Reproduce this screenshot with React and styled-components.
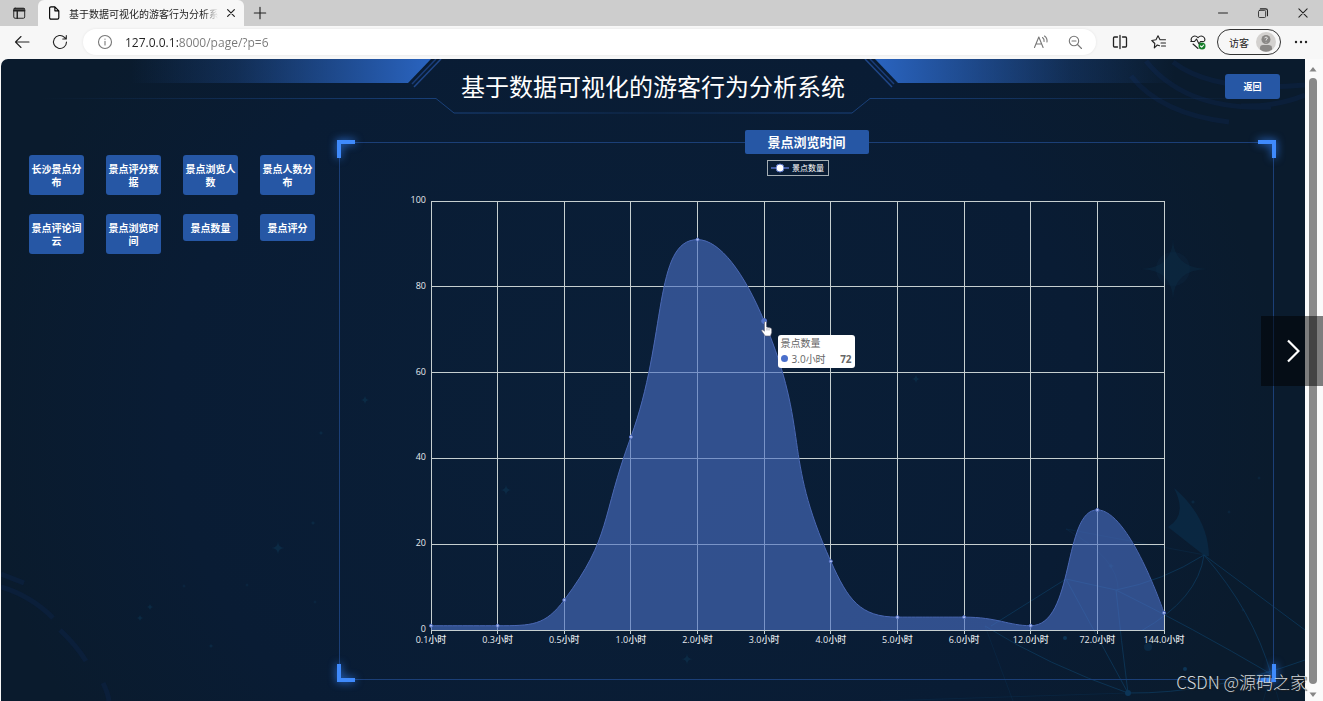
import React from 'react';
import styled, { createGlobalStyle, css } from 'styled-components';

const latin = '"Open Sans", "Noto Sans CJK SC", sans-serif';
const cjk = '"Noto Sans CJK SC", "Open Sans", sans-serif';

const GlobalStyle = createGlobalStyle`
  * {
    box-sizing: border-box;
  }
  body {
    margin: 0;
    background: #f7f7f7;
    font-family: ${latin};
    font-size: 12px;
  }
  button, input {
    font: inherit;
    border: 0;
    padding: 0;
    background: none;
  }
  a {
    text-decoration: none;
  }
  svg {
    display: block;
  }
`;

const Browser = styled.div`
  position: relative;
  display: flex;
  flex-direction: column;
  min-height: 100vh;
  overflow: hidden;
`;

const TabStrip = styled.div`
  display: flex;
  align-items: center;
  height: 26px;
  background: #cdcdcd;
`;

const IconButton = styled.button`
  display: flex;
  align-items: center;
  justify-content: center;
  flex: none;
  width: ${props => props.$width || 40}px;
  height: 24px;
  color: ${props => props.$color || '#222'};
`;

const Tab = styled.div`
  display: flex;
  align-items: center;
  width: 206px;
  height: 26px;
  padding-left: 9px;
  background: #f7f7f7;
  border-radius: 6px 6px 0 0;
`;

const TabTitle = styled.span`
  flex: 1;
  margin-left: 8px;
  overflow: hidden;
  white-space: nowrap;
  font-family: ${cjk};
  font-size: 10px;
  color: #1b1b1b;
  mask-image: linear-gradient(90deg, #000 90%, transparent 100%);
`;

const Spacer = styled.div`
  flex: 1;
`;

const Toolbar = styled.div`
  display: flex;
  align-items: center;
  height: 33px;
  padding: 0 2px 1px;
  background: #f7f7f7;
`;

const AddressBar = styled.label`
  display: flex;
  flex: 1;
  align-items: center;
  height: 26px;
  margin: 0 4px;
  padding: 0 4px 0 14px;
  background: #fff;
  border-radius: 13px;
  box-shadow: 0 0 3px rgba(0, 0, 0, 0.08);
  color: #777;
`;

/* host in dark, the rest of the address in grey */
const AddressInput = styled.input`
  flex: 1;
  min-width: 0;
  height: 20px;
  margin-left: 12px;
  outline: 0;
  font-size: 12px;
  color: transparent;
  background: linear-gradient(90deg, #222 53px, #777 53px);
  background-clip: text;
`;

const Guest = styled.button`
  display: flex;
  align-items: center;
  justify-content: space-between;
  width: 64px;
  height: 26px;
  padding: 0 4px 0 11px;
  border: 1px solid #333;
  border-radius: 13px;
  font-family: ${cjk};
  font-size: 10px;
  color: #222;
`;

const Viewport = styled.div`
  display: flex;
  flex: 1;
  padding-left: 1px;
`;

const Page = styled.div`
  position: relative;
  flex: 1;
  min-width: 0;
  padding-bottom: 21px;
  overflow: hidden;
  border-top-left-radius: 7px;
  background: radial-gradient(ellipse 50% 90% at 48% 55%, #0a1f38 0%, #091c34 70%, #0a1b2d 100%);
`;

const Backdrop = styled.svg`
  position: absolute;
  inset: 0;
  width: 100%;
  height: 100%;
`;

const Header = styled.header`
  position: relative;
  display: grid;
  grid-template-columns: 1fr auto 1fr;
  align-items: center;
  height: 58px;
  margin-bottom: 25px;
  padding-right: 25px;
`;

const HeaderArt = styled.svg`
  position: absolute;
  inset: 0;
  width: 100%;
  height: 58px;
`;

const SystemTitle = styled.h1`
  position: relative;
  grid-column: 2;
  margin: 0 0 4px 25px;
  font-family: ${cjk};
  font-size: 24px;
  font-weight: 400;
  line-height: 54px;
  color: #fff;
`;

const blueButton = css`
  display: block;
  background: #2657a5;
  border-radius: 3px;
  font-family: ${cjk};
  font-weight: 700;
  line-height: 13px;
  text-align: center;
  color: #fff;
`;

const BackLink = styled.a`
  ${blueButton}
  position: relative;
  justify-self: end;
  width: 55px;
  margin-bottom: 4px;
  padding: 6px 0;
  font-size: 9px;
`;

const Main = styled.main`
  position: relative;
  display: flex;
  align-items: flex-start;
  padding-right: 31px;
`;

const Menu = styled.nav`
  display: grid;
  grid-template-columns: repeat(4, 1fr);
  align-items: start;
  gap: 19px 22px;
  flex: none;
  width: 338px;
  padding: 13px 24px 0 28px;
`;

const MenuLink = styled.a`
  ${blueButton}
  padding: 7px 2px;
  font-size: 10px;
`;

const Panel = styled.section`
  position: relative;
  flex: 1;
  min-width: 0;
  border: 1px solid #1b3f77;
`;

const Corner = styled.span`
  position: absolute;
  width: 18px;
  height: 18px;
  ${props => props.$v}: -3px;
  ${props => props.$h}: -3px;
  border: 0 solid #3f8afc;
  border-${props => props.$v}-width: 4px;
  border-${props => props.$h}-width: 4px;
  filter: drop-shadow(0 0 4px #2f7bf0);
`;

const PanelTitle = styled.h2`
  position: absolute;
  top: -13px;
  left: 50%;
  width: 124px;
  margin: 0;
  transform: translateX(-50%);
  background: #2657a5;
  border-radius: 2px;
  font-family: ${cjk};
  font-size: 13px;
  line-height: 24px;
  text-align: center;
  color: #fff;
`;

const ChartSvg = styled.svg`
  width: 100%;
  height: auto;
  font-family: ${latin};
  font-size: 9px;
`;

const Tooltip = styled.div`
  position: absolute;
  left: 46.9%;
  top: 35.8%;
  width: 77px;
  padding: 1px 3px;
  background: #fff;
  border-radius: 3px;
  font-size: 10px;
  line-height: 15px;
  white-space: nowrap;
  color: #666;
`;

const TooltipRow = styled.div`
  display: flex;
  align-items: center;
  gap: 4px;
  line-height: 16px;

  strong {
    margin-left: auto;
  }
`;

const Dot = styled.i`
  width: 7px;
  height: 7px;
  border-radius: 50%;
  background: #4a6fcb;
`;

const Pointer = styled.svg`
  position: absolute;
  left: 45%;
  top: 33%;
`;

const Scrollbar = styled.div`
  display: flex;
  flex-direction: column;
  align-items: center;
  width: 18px;
  padding: 7px 3px 3px 0;
  background: #fafafa;
`;

const Thumb = styled.div`
  flex: 1;
  width: 8px;
  margin: 6px 0 8px;
  border-radius: 4px;
  background: #898989;
`;

const NextButton = styled.button`
  position: absolute;
  right: 0;
  top: 316px;
  display: flex;
  align-items: center;
  justify-content: center;
  width: 62px;
  height: 70px;
  padding-left: 2px;
  background: rgba(0, 0, 0, 0.5);
`;

const Watermark = styled.div`
  position: absolute;
  right: 16px;
  bottom: 6px;
  font-family: "Noto Sans CJK SC", "Liberation Sans", sans-serif;
  font-size: 17px;
  font-weight: 300;
  line-height: 26px;
  color: #d3d7da;
  text-shadow: 1px 1px 1px #222;
`;

const menu = [
  '长沙景点分布', '景点评分数据', '景点浏览人数', '景点人数分布',
  '景点评论词云', '景点浏览时间', '景点数量', '景点评分',
];

const hours = ['0.1', '0.3', '0.5', '1.0', '2.0', '3.0', '4.0', '5.0', '6.0', '12.0', '72.0', '144.0'];
const counts = [1, 1, 7, 45, 91, 72, 16, 3, 3, 1, 28, 4];

const plot = { left: 91, right: 824, top: 58, bottom: 487 };
const xAt = i => plot.left + ((plot.right - plot.left) * i) / (hours.length - 1);
const yAt = v => plot.bottom - ((plot.bottom - plot.top) * v) / 100;
const clamp = (v, a, b) => Math.max(Math.min(a, b), Math.min(v, Math.max(a, b)));

// bezier through every point, control points kept between their neighbours
const smoothPath = (points, smooth = 0.5) => {
  let d = `M${points[0].join(' ')}`;
  let cp0 = points[0];
  for (let i = 1; i < points.length; i++) {
    const prev = points[i - 1];
    const cur = points[i];
    const next = points[i + 1];
    let cp1 = cur;
    let nextCp0 = cur;
    if (next) {
      const lenPrev = Math.hypot(cur[0] - prev[0], cur[1] - prev[1]);
      const lenNext = Math.hypot(next[0] - cur[0], next[1] - cur[1]);
      const ratio = lenNext / (lenNext + lenPrev);
      nextCp0 = cur.map((c, k) => clamp(c + (next[k] - prev[k]) * smooth * ratio, c, next[k]));
      cp1 = cur.map((c, k) => clamp(c - ((nextCp0[k] - c) * lenPrev) / lenNext, c, prev[k]));
      nextCp0 = cur.map((c, k) => c + ((c - cp1[k]) * lenNext) / lenPrev);
    }
    d += ` C${cp0.join(' ')} ${cp1.join(' ')} ${cur.join(' ')}`;
    cp0 = nextCp0;
  }
  return d;
};

const Icon = ({ size = 16, children, ...rest }) => (
  <svg width={size} height={size} viewBox="0 0 16 16" fill="none" stroke="currentColor" strokeWidth="1.1" strokeLinecap="round" strokeLinejoin="round" aria-hidden="true" {...rest}>
    {children}
  </svg>
);

const Chart = () => {
  const points = counts.map((v, i) => [xAt(i), yAt(v)]);
  const line = smoothPath(points);
  return (
    <ChartSvg viewBox="0 0 933 536" role="img" aria-label="景点浏览时间">
      <g stroke="#c6cfd0" strokeWidth="1" shapeRendering="crispEdges">
        {[0, 20, 40, 60, 80, 100].map(v => (
          <line key={v} x1={plot.left} x2={plot.right} y1={yAt(v)} y2={yAt(v)} />
        ))}
        {hours.map((h, i) => (
          <line key={h} x1={xAt(i)} x2={xAt(i)} y1={plot.top} y2={plot.bottom + 4} />
        ))}
      </g>
      <path d={`${line} L${plot.right} ${plot.bottom} L${plot.left} ${plot.bottom} Z`} fill="#4a6fc4" fillOpacity="0.62" />
      <path d={line} fill="none" stroke="#4a68b4" strokeWidth="1" />
      <line x1={plot.left} x2={plot.right} y1={plot.bottom} y2={plot.bottom} stroke="#c6cfd0" shapeRendering="crispEdges" />
      {points.map(([x, y], i) => (
        <circle key={i} cx={x} cy={y} r={i === 5 ? 2.5 : 1.5} fill={i === 5 ? '#4f74c9' : '#b4c4f0'} stroke="#5470c6" />
      ))}
      <g fill="#e6eaee" fontWeight="500">
        {[0, 20, 40, 60, 80, 100].map(v => (
          <text key={v} x={plot.left - 5} y={yAt(v) + 2} textAnchor="end">{v}</text>
        ))}
        {hours.map((h, i) => (
          <text key={h} x={xAt(i)} y={plot.bottom + 13} textAnchor="middle">{h}小时</text>
        ))}
      </g>
      <rect x="427.5" y="17.5" width="61" height="15" fill="none" stroke="#a4adb3" />
      <path d="M431 25h18" stroke="#5470c6" strokeWidth="1.4" />
      <circle cx="440" cy="25" r="4" fill="#fff" stroke="#5470c6" />
      <text x="452" y="28" fontSize="8" fill="#fff">景点数量</text>
    </ChartSvg>
  );
};

const stars = [
  [277, 489, 7], [149, 548, 4], [139, 559, 4], [210, 587, 3], [246, 526, 2], [312, 464, 3], [364, 341, 5],
  [505, 431, 6], [686, 600, 6], [183, 527, 2], [314, 543, 2], [1258, 419, 2], [1228, 453, 2], [1242, 551, 2],
  [915, 320, 5], [1110, 507, 4], [320, 374, 3], [1192, 443, 3],
];

const BackdropArt = () => (
  <Backdrop viewBox="0 0 1304 642" preserveAspectRatio="xMaxYMax slice" fill="none" aria-hidden="true">
    <g fill="#0d3450" fillOpacity="0.6">
      {stars.map(([x, y, r]) => (
        <path key={`${x}-${y}`} d={`M${x} ${y - r}Q${x} ${y} ${x + r} ${y}Q${x} ${y} ${x} ${y + r}Q${x} ${y} ${x - r} ${y}Q${x} ${y} ${x} ${y - r}`} />
      ))}
      <path d="M1172 180Q1173 209 1206 210Q1173 211 1172 240Q1171 211 1140 210Q1171 209 1172 180" fillOpacity="0.3" />
      <circle cx="1172" cy="210" r="17" fillOpacity="0.2" />
    </g>
    <g stroke="#0b2140" strokeWidth="5">
      <path d="M0 515l23 9M0 528Q30 537 52 559M59 571Q75 586 85 602M102 624Q107 634 108 642" strokeOpacity="0.7" />
      <path d="M1130 17Q1160 55 1228 63M1145 2Q1185 52 1270 48M1172 3Q1212 34 1304 26M1240 47Q1275 48 1304 36" strokeOpacity="0.7" />
    </g>
    <path d="M1173 429Q1207 458 1208 497L1204 497L1167 468Q1187 456 1173 429" fill="#0a2c48" fillOpacity="0.7" />
    <g stroke="#0c3557" strokeOpacity="0.9">
      <path d="M1065 520L1115 531Q1162 522 1203 496L1304 571M1115 531Q1120 580 1127 634L1065 520L990 567M1115 531Q1190 568 1270 615M984 567Q1046 606 1127 634Q1210 635 1304 601M1203 496Q1252 552 1270 615M1203 496Q1197 540 1140 572" />
      <path d="M1065 470Q1118 500 1117 531M1065 470L1204 496M1270 615l8 27M1270 615l-8 27M984 567l28 75M1127 634L880 642" strokeOpacity="0.35" />
    </g>
    <g fill="#0c3557">
      <circle cx="1127" cy="634" r="3" />
      <circle cx="1147" cy="588" r="4" fillOpacity="0.5" />
      <circle cx="1184" cy="610" r="2" />
      <circle cx="1064" cy="579" r="2" />
    </g>
  </Backdrop>
);

const App = () => (
  <>
    <GlobalStyle />
    <Browser>
      <TabStrip>
        <IconButton $width={38} aria-label="Tab actions">
          <Icon size={14}><rect x="2" y="2.5" width="12.5" height="11.5" rx="1.5" /><path d="M2 5.5h12.5M6 5.5V14M2.5 3.5h11.5" strokeWidth="1.6" /></Icon>
        </IconButton>
        <Tab>
          <Icon size={14}><path d="M3 2.5A1.5 1.5 0 0 1 4.5 1H9l4.5 4.5v8A1.5 1.5 0 0 1 12 15H4.5A1.5 1.5 0 0 1 3 13.5zM9 1v4.5h4.5" strokeWidth="1.3" /></Icon>
          <TabTitle>基于数据可视化的游客行为分析系统</TabTitle>
          <IconButton $width={26} aria-label="Close tab">
            <Icon size={12}><path d="M3.5 3.5l9 9M12.5 3.5l-9 9" strokeWidth="1.6" /></Icon>
          </IconButton>
        </Tab>
        <IconButton $width={32} aria-label="New tab">
          <Icon size={14}><path d="M8 1.5v13M1.5 8h13" strokeWidth="1.3" /></Icon>
        </IconButton>
        <Spacer />
        <IconButton aria-label="Minimize"><Icon size={12}><path d="M2 8h12" strokeWidth="1.3" /></Icon></IconButton>
        <IconButton aria-label="Restore">
          <Icon size={12}><rect x="2" y="4.5" width="9.5" height="9.5" rx="1.5" /><path d="M4.5 2.5h7a2.5 2.5 0 0 1 2.5 2.5v6.5" strokeWidth="1.4" /></Icon>
        </IconButton>
        <IconButton aria-label="Close"><Icon size={12}><path d="M2.5 2.5l11 11M13.5 2.5l-11 11" strokeWidth="1.4" /></Icon></IconButton>
      </TabStrip>
      <Toolbar>
        <IconButton $width={39} aria-label="Back"><Icon><path d="M15 8H1.5M7 2.5L1.5 8 7 13.5" /></Icon></IconButton>
        <IconButton $width={38} aria-label="Refresh"><Icon><path d="M14.5 8a6.5 6.5 0 1 1-2-4.700L14.300 5M14.300 1.500V5H10.800" /></Icon></IconButton>
        <AddressBar>
          <Icon><circle cx="8" cy="8" r="6.500" /><path d="M8 7.300v3.700M8 5v.2" /></Icon>
          <AddressInput type="text" aria-label="Address" defaultValue="127.0.0.1:8000/page/?p=6" />
          <IconButton $width={34} $color="#777" aria-label="Read aloud">
            <Icon><path d="M1.500 13.500L5.800 3l4.300 10.500M3 10h5.600M9.500 3.500q2 1.500 1.600 4M11.500 2q3 2 2.500 6" /></Icon>
          </IconButton>
          <IconButton $width={34} $color="#777" aria-label="Zoom out">
            <Icon><circle cx="7" cy="7" r="4.700" /><path d="M10.500 10.500L14.500 14.500M5 7h4" /></Icon>
          </IconButton>
        </AddressBar>
        <IconButton aria-label="Split screen">
          <Icon><path d="M5.500 3H2.500A1 1 0 0 0 1.500 4v8a1 1 0 0 0 1 1h3M10.500 3h3a1 1 0 0 1 1 1v8a1 1 0 0 1-1 1h-3M8 1.500v13" strokeWidth="1.300" /></Icon>
        </IconButton>
        <IconButton $width={38} aria-label="Favorites">
          <Icon><path d="M8.500 11.800L6.300 11 3.300 13.800 3.800 9.500 .8 6.500 5 5.800 7 1.800 9 5.800H14.500M10 9h4.500M10.500 12h4" /></Icon>
        </IconButton>
        <IconButton $width={39} aria-label="Browser essentials">
          <Icon><path d="M1.500 7C0 3.500 4.500 0 8 3.700 11.500 0 16 3.500 14.500 7M3 10l5 4.500M.8 7.500h3.700L6.500 5l2.500 5 1.500-2.500h3" /><circle cx="12" cy="12" r="3.500" fill="#157f2a" stroke="none" /><path d="M10.500 12l1.200 1.200 2-2.200" stroke="#fff" /></Icon>
        </IconButton>
        <Guest>
          访客
          <svg width="20" height="20" viewBox="0 0 20 20" aria-hidden="true">
            <circle cx="10" cy="10" r="10" fill="#d3d1cf" />
            <path d="M4 17.500Q3.500 13 7 13h6q3.500 0 3 4.500A10 10 0 0 1 4 17.500" fill="#8a8886" />
            <circle cx="10" cy="7.500" r="4.500" fill="#8a8886" />
            <path d="M8.700 6.200Q9 5 10.200 5.100 12 5.500 11 7 10 7.500 10 8.500M10 10v.4" fill="none" stroke="#eee" />
          </svg>
        </Guest>
        <IconButton aria-label="Settings and more">
          <Icon fill="currentColor" stroke="none"><circle cx="3" cy="8" r="1.200" /><circle cx="8" cy="8" r="1.200" /><circle cx="13" cy="8" r="1.200" /></Icon>
        </IconButton>
      </Toolbar>
      <Viewport>
        <Page>
          <BackdropArt />
          <Header>
            <HeaderArt viewBox="0 0 1304 58" preserveAspectRatio="xMidYMin slice" fill="none" aria-hidden="true">
              <defs>
                <linearGradient id="wing" gradientUnits="userSpaceOnUse" x1="130" y1="0" x2="430" y2="0">
                  <stop offset="0" stopColor="#2a64c0" stopOpacity="0" />
                  <stop offset="0.35" stopColor="#2a64c0" stopOpacity="0.25" />
                  <stop offset="1" stopColor="#2a64c0" />
                </linearGradient>
                <linearGradient id="rule" gradientUnits="userSpaceOnUse" x1="40" y1="0" x2="652" y2="0">
                  <stop offset="0" stopColor="#1d4a8c" stopOpacity="0" />
                  <stop offset="0.68" stopColor="#1d4a8c" stopOpacity="0.8" />
                  <stop offset="1" stopColor="#1d4a8c" stopOpacity="0.3" />
                </linearGradient>
                <g id="half">
                  <path d="M0 0H430L407 24H0Z" fill="url(#wing)" />
                  <path d="M435 0L411 25" stroke="#1a3c78" strokeWidth="1.500" />
                  <path d="M440 0L413 28" stroke="#1f4688" strokeWidth="1.500" />
                  <path d="M40 39.500H435L453 54H652" stroke="url(#rule)" />
                </g>
              </defs>
              <use href="#half" />
              <use href="#half" transform="matrix(-1 0 0 1 1304 0)" />
            </HeaderArt>
            <SystemTitle>基于数据可视化的游客行为分析系统</SystemTitle>
            <BackLink href="#back">返回</BackLink>
          </Header>
          <Main>
            <Menu>
              {menu.map(item => (
                <MenuLink key={item} href={`#${item}`}>{item}</MenuLink>
              ))}
            </Menu>
            <Panel>
              <Corner $v="top" $h="left" />
              <Corner $v="top" $h="right" />
              <Corner $v="bottom" $h="left" />
              <Corner $v="bottom" $h="right" />
              <Chart />
              <PanelTitle>景点浏览时间</PanelTitle>
              <Tooltip role="tooltip">
                景点数量
                <TooltipRow><Dot />3.0小时<strong>72</strong></TooltipRow>
              </Tooltip>
              <Pointer width="14" height="18" viewBox="0 0 14 18" aria-hidden="true">
                <path d="M4.500 2.200q1-1.200 2 0V7l1.200.3 1.500.3 1.500.5 1 .8v3.600L10.500 16H5.200L1.500 10.800q.2-1.600 1.800-.6l1.200 1z" fill="#fff" stroke="#556" strokeWidth="0.600" />
                <path d="M7 8v2.500M9 8.300v2.200" stroke="#778" strokeWidth="0.600" />
              </Pointer>
            </Panel>
          </Main>
        </Page>
        <Scrollbar aria-hidden="true">
          <svg width="8" height="6" viewBox="0 0 8 6"><path d="M4 1l3.500 4.500h-7z" fill="#858585" /></svg>
          <Thumb />
          <svg width="8" height="6" viewBox="0 0 8 6"><path d="M4 5L.5.5h7z" fill="#858585" /></svg>
        </Scrollbar>
      </Viewport>
      <NextButton aria-label="Next">
        <svg width="14" height="24" viewBox="0 0 14 24" fill="none" stroke="#fff" strokeWidth="2.200" aria-hidden="true"><path d="M2 1.500L12.500 12 2 22.500" /></svg>
      </NextButton>
      <Watermark>CSDN @源码之家</Watermark>
    </Browser>
  </>
);

export default App;
